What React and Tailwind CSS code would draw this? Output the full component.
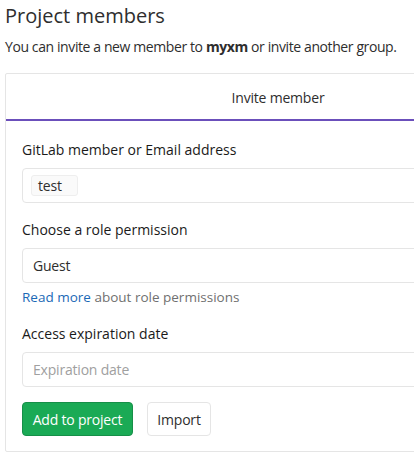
import React from 'react';

const font = { fontFamily: '"Open Sans", "Noto Sans", Arial, sans-serif' };

export default function App() {
  return (
    <div className="w-[414px] h-[456px] overflow-hidden bg-white text-[#2e2e2e] pl-[5px]" style={font}>
      <h3 className="text-[20px] leading-[24px] pt-[4px] font-normal">Project members</h3>
      <p className="mt-[9px] text-[14px] leading-[20px] tracking-[-0.4px]">
        You can invite a new member to <strong className="font-bold">myxm</strong> or invite another group.
      </p>

      <div className="mt-[16px] w-[546px] h-[379px] border border-[#e5e5e5] rounded-[2px]">
        {/* Tab header */}
        <div className="h-[47px] border-b-2 border-[#6b4fbb] flex items-center justify-center">
          <span className="text-[14px] font-medium pt-[1px] tracking-[-0.2px]">Invite member</span>
        </div>

        <div className="pl-[16px] pt-[19px] flex flex-col">
          <label className="text-[14px] font-medium leading-[20px] text-[#1a1a1a]">GitLab member or Email address</label>
          <div className="mt-[8px] h-[35px] border border-[#e5e5e5] rounded-[4px] flex items-center pl-[8px]">
            <span className="h-[21px] w-[47px] pl-[6px] flex items-center bg-[#fafafa] border border-[#eee] rounded-[3px] text-[14px] tracking-[-0.2px]">test</span>
          </div>

          <label className="mt-[17px] text-[14px] font-medium leading-[20px] text-[#1a1a1a]">Choose a role permission</label>
          <div className="mt-[8px] h-[35px] border border-[#e5e5e5] rounded-[4px] flex items-center pl-[10px] text-[14px] tracking-[-0.2px]">
            Guest
          </div>
          <p className="mt-[5px] text-[13.5px] leading-[18px] text-[#707070]">
            <a className="text-[#1b69b6]">Read more</a> about role permissions
          </p>

          <label className="mt-[18px] text-[14px] font-medium leading-[20px] text-[#1a1a1a]">Access expiration date</label>
          <div className="mt-[8px] h-[35px] border border-[#e5e5e5] rounded-[4px] flex items-center pl-[10px] text-[14px] text-[#a0a0a0] tracking-[-0.2px]">
            Expiration date
          </div>

          <div className="mt-[15px] flex gap-[14px]">
            <button className="h-[34px] w-[111px] rounded-[4px] bg-[#1aaa55] border border-[#168f48] text-white text-[14px] tracking-[-0.2px]">
              Add to project
            </button>
            <button className="h-[34px] w-[64px] rounded-[4px] bg-white border border-[#e5e5e5] text-[14px] tracking-[-0.2px]">
              Import
            </button>
          </div>
        </div>
      </div>
    </div>
  );
}
